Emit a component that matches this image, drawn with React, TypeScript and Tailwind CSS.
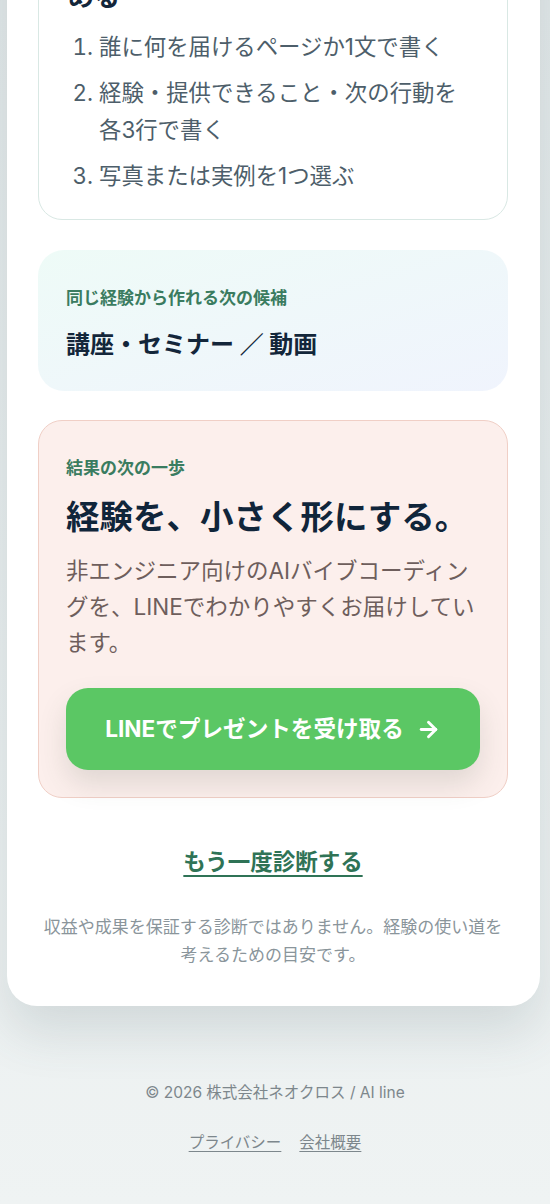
import { ArrowRight } from 'lucide-react'

const steps = [
  '誰に何を届けるページか1文で書く',
  '経験・提供できること・次の行動を各3行で書く',
  '写真または実例を1つ選ぶ',
]

export default function App() {
  return (
    <div className="min-h-screen bg-gradient-to-b from-[#e2e8e9] to-[#eff3f3] font-['Inter','Noto_Sans_CJK_JP',sans-serif]">
      <div className="flex flex-col">
        <main className="-mt-[121px] ml-[7px] mr-[10px] flex flex-col rounded-[30px] bg-white pb-[37px] pl-[31px] pr-[32px] pt-[33px] shadow-[0_26px_50px_rgba(70,92,98,0.16)]">
          {/* checklist card */}
          <section className="rounded-[24px] border border-[#d9e8e4] bg-white pb-[25px] pl-[29px] pr-[29px] pt-[30px]">
            <h2 className="text-[26px] font-bold leading-[36px] text-[#13263a]">
              経験を1ページにまと
              <br />
              める
            </h2>
            <ol className="mt-[13px] list-decimal space-y-[9px] pl-[31px] pr-[10px] text-[22.4px] leading-[37px] text-[#4d5e6a]">
              {steps.map((s) => (
                <li key={s}>{s}</li>
              ))}
            </ol>
          </section>

          {/* next candidate */}
          <section className="mt-[30px] rounded-[26px] bg-gradient-to-br from-[#eefbf7] to-[#f0f4fd] px-[28px] pb-[29px] pt-[35px]">
            <p className="text-[17px] font-bold leading-[26px] text-[#3a7c60]">同じ経験から作れる次の候補</p>
            <p className="mt-[17px] text-[24px] font-bold leading-[34px] text-[#13263a]">講座・セミナー ／ 動画</p>
          </section>

          {/* CTA */}
          <section className="mt-[29px] rounded-[24px] border border-[#f0cfc6] bg-[#fcefec] px-[27px] pb-[27px] pt-[34px]">
            <p className="text-[17px] font-bold leading-[26px] text-[#3a7c60]">結果の次の一歩</p>
            <h3 className="mt-[14px] text-[33.5px] font-bold leading-[44px] text-[#10253a]">経験を、小さく形にする。</h3>
            <p className="mt-[14px] text-[22.5px] leading-[36px] text-[#6e5e5c]">
              非エンジニア向けのAIバイブコーディングを、LINEでわかりやすくお届けしています。
            </p>
            <button className="mt-[27px] flex h-[82px] w-full items-center justify-center gap-[12px] rounded-[22px] bg-[#5bc764] text-[22.6px] font-bold text-white shadow-[0_14px_28px_rgba(70,80,70,0.15)]">
              <span>LINEでプレゼントを受け取る</span>
              <ArrowRight size={25} strokeWidth={2.8} />
            </button>
          </section>

          <a
            href="#"
            className="mt-[48px] self-center text-[22.5px] font-bold leading-[32px] text-[#2f7356] underline decoration-2 underline-offset-[5px]"
          >
            もう一度診断する
          </a>

          <p className="mt-[35px] text-center text-[17px] leading-[28px] text-[#8a959b]">
            収益や成果を保証する診断ではありません。経験の使い道を考えるための目安です。
          </p>
        </main>

        <footer className="flex flex-col items-center pb-[50px] pt-[75px] text-[15.5px] leading-[24px] text-[#7d878c]">
          <p>© 2026 株式会社ネオクロス / AI line</p>
          <div className="mt-[26px] flex gap-[18px]">
            <a href="#" className="underline underline-offset-[3px]">プライバシー</a>
            <a href="#" className="underline underline-offset-[3px]">会社概要</a>
          </div>
        </footer>
      </div>
    </div>
  )
}
